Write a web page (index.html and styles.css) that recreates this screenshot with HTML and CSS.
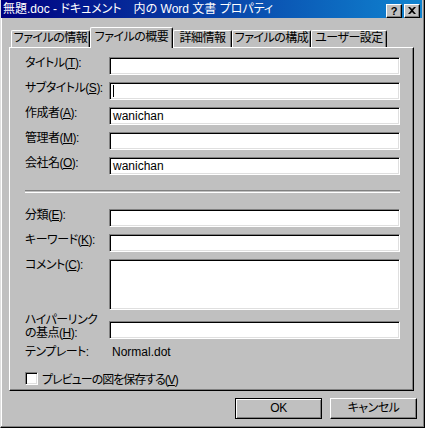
FILE: index.html
```html
<!DOCTYPE html>
<html lang="ja">
<head>
<meta charset="utf-8">
<title>プロパティ</title>
<link rel="stylesheet" href="styles.css">
</head>
<body>
<div class="window">
  <div class="titlebar">
    <span class="title">無題.doc - ドキュメント　内の Word 文書 プロパティ</span>
    <div class="tbtns">
      <span class="tbtn help">?</span>
      <span class="tbtn close"><svg width="8" height="7" viewBox="0 0 8 7"><path d="M0 0h2l2 2 2-2h2L5 3.5 8 7H6L4 5 2 7H0l3-3.5z" fill="#000"/></svg></span>
    </div>
  </div>
  <div class="tabs">
    <div class="tab t1">ファイルの情報</div>
    <div class="tab sel t2">ファイルの概要</div>
    <div class="tab t3">詳細情報</div>
    <div class="tab t4">ファイルの構成</div>
    <div class="tab t5">ユーザー設定</div>
  </div>
  <div class="panel">
    <div class="row"><label class="lbl">タイトル(<u>T</u>):</label><div class="field"></div></div>
    <div class="row"><label class="lbl">サブタイトル(<u>S</u>):</label><div class="field"><span class="caret"></span></div></div>
    <div class="row"><label class="lbl">作成者(<u>A</u>):</label><div class="field">wanichan</div></div>
    <div class="row"><label class="lbl">管理者(<u>M</u>):</label><div class="field"></div></div>
    <div class="row"><label class="lbl">会社名(<u>O</u>):</label><div class="field">wanichan</div></div>
    <div class="sep"></div>
    <div class="row"><label class="lbl">分類(<u>E</u>):</label><div class="field"></div></div>
    <div class="row"><label class="lbl">キーワード(<u>K</u>):</label><div class="field"></div></div>
    <div class="row tall"><label class="lbl">コメント(<u>C</u>):</label><div class="field area"></div></div>
    <div class="row two"><label class="lbl">ハイパーリンク<br>の基点(<u>H</u>):</label><div class="field"></div></div>
    <div class="row info"><span class="lbl">テンプレート:</span><span class="val">Normal.dot</span></div>
    <div class="check"><span class="box"></span><span class="ctext">プレビューの図を保存する(<u>V</u>)</span></div>
  </div>
  <div class="buttons">
    <div class="btn default">OK</div>
    <div class="btn">キャンセル</div>
  </div>
</div>
</body>
</html>
```

FILE: styles.css
```css
html, body {
  margin: 0;
  padding: 0;
  background: #c0c0c0;
}
body {
  font-family: "Liberation Sans", "Noto Sans CJK JP", sans-serif;
  font-size: 12px;
  font-feature-settings: "palt" 1;
  color: #000;
}
.window {
  width: 425px;
  height: 428px;
  box-sizing: border-box;
  background: #c0c0c0;
  border-left: 1px solid #dfdfdf;
  border-right: 1px solid #000;
  border-bottom: 1px solid #000;
  box-shadow: inset -1px -1px #808080, inset 1px 0 #fff;
  display: flex;
  flex-direction: column;
}
.titlebar {
  height: 18px;
  margin-right: 2px;
  background: linear-gradient(to right, #000080, #1084d0);
  display: flex;
  align-items: center;
  justify-content: space-between;
  color: #fff;
}
.title {
  padding-left: 2px;
  line-height: 18px;
  white-space: nowrap;
}
.tbtns {
  display: flex;
  gap: 2px;
  margin-right: 2px;
  margin-top: 4px;
}
.tbtn {
  width: 16px;
  height: 14px;
  box-sizing: border-box;
  background: #c0c0c0;
  border-top: 1px solid #fff;
  border-left: 1px solid #fff;
  border-right: 1px solid #000;
  border-bottom: 1px solid #000;
  box-shadow: inset -1px -1px #808080;
  display: flex;
  align-items: center;
  justify-content: center;
  color: #000;
}
.help {
  font-family: "Liberation Sans", sans-serif;
  font-weight: bold;
  font-size: 11px;
  line-height: 12px;
}
.close svg { display: block; margin-top: -1px; }
.tabs {
  display: flex;
  height: 20px;
  margin-top: 9px;
  margin-left: 10px;
  position: relative;
  z-index: 1;
}
.tab {
  box-sizing: border-box;
  height: 17px;
  margin-top: 3px;
  border-top: 1px solid #fff;
  border-left: 1px solid #fff;
  border-right: 1px solid #000;
  border-radius: 2px 2px 0 0;
  box-shadow: inset -1px 0 #808080;
  background: #c0c0c0;
  text-align: center;
  line-height: 15px;
  white-space: nowrap;
  letter-spacing: -0.5px;
}
.t1 { width: 79px; }
.t2 { width: 83px; }
.t3 { width: 59px; }
.t4 { width: 79px; }
.t5 { width: 76px; }
.tab.sel {
  height: 21px;
  margin-top: 0;
  line-height: 18px;
}
.panel {
  box-sizing: border-box;
  width: 405px;
  height: 344px;
  margin-left: 8px;
  border-top: 1px solid #fff;
  border-left: 1px solid #fff;
  border-right: 1px solid #000;
  border-bottom: 1px solid #000;
  box-shadow: inset -1px -1px #808080;
  padding: 9px 0 0 15px;
  display: flex;
  flex-direction: column;
}
.row {
  display: flex;
  align-items: flex-start;
  height: 18px;
  margin-bottom: 7px;
}
.lbl {
  width: 84px;
  flex: none;
  line-height: 14px;
  margin-top: -1px;
  white-space: nowrap;
  letter-spacing: -0.5px;
}
.field {
  width: 291px;
  height: 18px;
  box-sizing: border-box;
  background: #fff;
  border-top: 1px solid #808080;
  border-left: 1px solid #808080;
  border-right: 1px solid #fff;
  border-bottom: 1px solid #fff;
  box-shadow: inset 1px 1px #000, inset -1px -1px #dfdfdf;
  padding-left: 3px;
  line-height: 16px;
  display: flex;
  align-items: center;
}
.caret {
  width: 1px;
  height: 12px;
  background: #000;
}
.sep {
  width: 375px;
  height: 1px;
  border-top: 1px solid #808080;
  border-bottom: 1px solid #fff;
  margin-top: 8px;
  margin-bottom: 16px;
}
.row.tall {
  height: 51px;
  margin-bottom: 4px;
}
.field.area {
  height: 51px;
}
.row.two {
  height: 26px;
  align-items: flex-end;
  margin-bottom: 5px;
}
.row.two .lbl {
  line-height: 13px;
  margin-top: 0;
}
.row.two .field {
  margin-bottom: 1px;
}
.row.info {
  height: 14px;
  margin-bottom: 12px;
  align-items: center;
}
.row.info .lbl { margin-top: 0; }
.val {
  padding-left: 3px;
  line-height: 14px;
}
.check {
  display: flex;
  align-items: center;
  gap: 4px;
  height: 14px;
}
.ctext {
  letter-spacing: -1px;
}
.box {
  width: 13px;
  height: 13px;
  box-sizing: border-box;
  background: #fff;
  border-top: 1px solid #808080;
  border-left: 1px solid #808080;
  border-right: 1px solid #fff;
  border-bottom: 1px solid #fff;
  box-shadow: inset 1px 1px #000, inset -1px -1px #dfdfdf;
}
.buttons {
  display: flex;
  justify-content: flex-end;
  gap: 8px;
  margin-top: 7px;
  margin-right: 7px;
}
.btn {
  width: 87px;
  height: 21px;
  box-sizing: border-box;
  border-top: 1px solid #fff;
  border-left: 1px solid #fff;
  border-right: 1px solid #000;
  border-bottom: 1px solid #000;
  box-shadow: inset -1px -1px #808080;
  text-align: center;
  line-height: 19px;
  letter-spacing: -0.5px;
}
.btn.default {
  border: 1px solid #000;
  box-shadow: inset 1px 1px #fff, inset -1px -1px #808080;
}
```
